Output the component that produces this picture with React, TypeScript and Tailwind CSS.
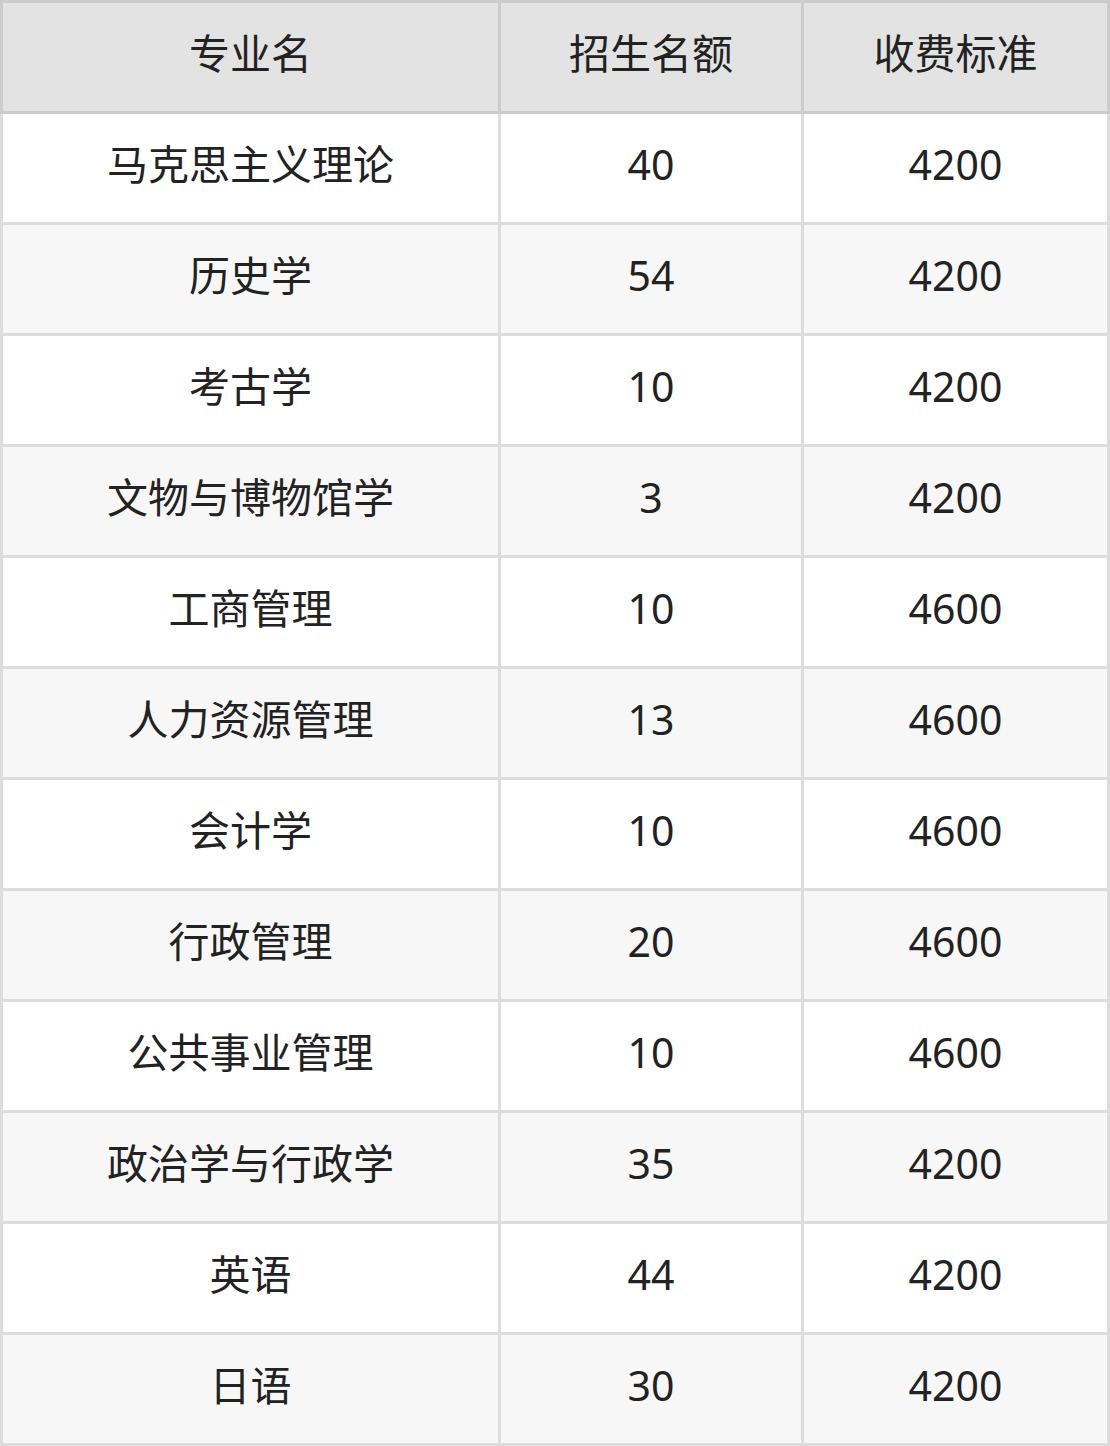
const rows: [string, string, string][] = [
  ['马克思主义理论', '40', '4200'],
  ['历史学', '54', '4200'],
  ['考古学', '10', '4200'],
  ['文物与博物馆学', '3', '4200'],
  ['工商管理', '10', '4600'],
  ['人力资源管理', '13', '4600'],
  ['会计学', '10', '4600'],
  ['行政管理', '20', '4600'],
  ['公共事业管理', '10', '4600'],
  ['政治学与行政学', '35', '4200'],
  ['英语', '44', '4200'],
  ['日语', '30', '4200'],
];

const font = { fontFamily: '"Noto Sans", "Noto Sans CJK SC", sans-serif' };

export default function App() {
  return (
    <div className="w-[1110px] text-[41px] text-[#222222]" style={font}>
      <div className="grid grid-cols-[495px_300px_303px] gap-x-[3px] bg-[#cccccc] p-[3px]">
        {['专业名', '招生名额', '收费标准'].map((h) => (
          <div key={h} className="h-[108px] pb-[6px] bg-[#e3e3e3] flex items-center justify-center">
            {h}
          </div>
        ))}
      </div>
      <div className="grid grid-cols-[495px_300px_303px] gap-[3px] bg-[#dddddd] px-[3px] pb-[3px]">
        {rows.map((r, i) =>
          r.map((c, j) => (
            <div
              key={i + '-' + j}
              className={`h-[108px] pb-[6px] flex items-center justify-center ${i % 2 === 1 ? 'bg-[#f7f7f7]' : 'bg-white'}`}
            >
              {c}
            </div>
          ))
        )}
      </div>
    </div>
  );
}
